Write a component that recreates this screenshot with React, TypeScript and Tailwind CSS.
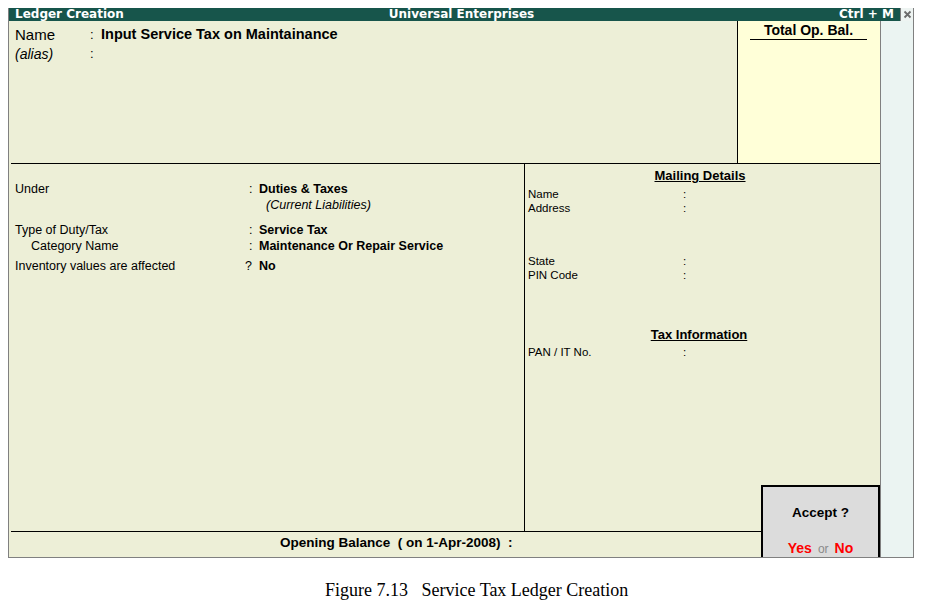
import React from 'react';

const sans = { fontFamily: '"Liberation Sans", Arial, sans-serif' };

function Field({ label, mark = ':', value, indent = false, markClass = '' }: { label: string; mark?: string; value?: React.ReactNode; indent?: boolean; markClass?: string }) {
  return (
    <div className="flex h-[15px] items-center text-[12.5px] leading-none text-black">
      <span className={`w-[234px] shrink-0 ${indent ? 'pl-[16px]' : ''}`}>{label}</span>
      <span className={`w-[10px] shrink-0 ${markClass}`}>{mark}</span>
      <span className="font-bold">{value}</span>
    </div>
  );
}

function MailRow({ label }: { label: string }) {
  return (
    <div className="flex h-[14px] items-center text-[11.5px] leading-none text-black">
      <span className="w-[155px] shrink-0">{label}</span>
      <span>:</span>
    </div>
  );
}

export default function App() {
  return (
    <div className="w-[925px] h-[605px] bg-white relative" style={sans}>
      <div className="pt-[8px] pl-[8px]">
        {/* window frame */}
        <div className="w-[906px] border-x border-b border-[#808080] flex flex-col">
          {/* title bar */}
          <div className="flex h-[13px]">
            <div
              className="flex-1 bg-[#17554b] text-white font-bold text-[12px] leading-[13px] flex items-center px-[6px]"
              style={{ fontFamily: '"DejaVu Sans", Verdana, sans-serif' }}
            >
              <span className="w-[300px]">Ledger Creation</span>
              <span className="flex-1 text-center pl-[14px]">Universal Enterprises</span>
              <span className="w-[300px] text-right">Ctrl + M</span>
            </div>
            <div className="w-[13px] bg-[#eef4f2] border-l border-[#808080] flex items-center justify-center">
              <svg width="9" height="9" viewBox="0 0 9 9">
                <path d="M1.5 1.5 L7.5 7.5 M7.5 1.5 L1.5 7.5" stroke="#6b6b6b" strokeWidth="1.8" />
              </svg>
            </div>
          </div>

          {/* body */}
          <div className="flex h-[536px]">
            <div className="w-[872px] bg-[#edefd7] border-r border-[#808080] relative flex flex-col">
              {/* top section */}
              <div className="flex h-[142px]">
                <div className="flex-1 pl-[6px] pt-[5px]">
                  <div className="flex h-[17px] items-center leading-none">
                    <span className="w-[75px] text-[15px]">Name</span>
                    <span className="w-[11px] text-[13px]">:</span>
                    <span className="text-[14.5px] font-bold">Input Service Tax on Maintainance</span>
                  </div>
                  <div className="flex h-[17px] items-center leading-none mt-[2px]">
                    <span className="w-[75px] text-[14px] italic">(alias)</span>
                    <span className="w-[11px] text-[13px]">:</span>
                  </div>
                </div>
                <div className="w-[143px] bg-[#ffffd8] border-l border-black pt-[2px]">
                  <div className="ml-[12px] w-[117px] border-b border-black text-center text-[14px] font-bold leading-[15px] pb-[1px]">
                    Total Op. Bal.
                  </div>
                </div>
              </div>

              {/* middle section */}
              <div className="pl-[2px]">
                <div className="flex h-[368px] border-t border-black">
                  <div className="w-[514px] border-r border-black pl-[4px] pt-[18px]">
                    <Field label="Under" value="Duties & Taxes" />
                    <div className="h-[15px] flex items-center pl-[251px] text-[12.5px] italic leading-none mt-[1px]">(Current Liabilities)</div>
                    <div className="mt-[10px]">
                      <Field label="Type of Duty/Tax" value="Service Tax" />
                    </div>
                    <div className="mt-[1px]">
                      <Field label="Category Name" indent value="Maintenance Or Repair Service" />
                    </div>
                    <div className="mt-[5px]">
                      <Field label="Inventory values are affected" mark="?" markClass="-ml-[4px] mr-[4px]" value="No" />
                    </div>
                  </div>
                  <div className="flex-1 pl-[3px] pt-[4px]">
                    <div className="text-center text-[13px] font-bold underline leading-[16px] pr-[8px]">Mailing Details</div>
                    <div className="mt-[4px]">
                      <MailRow label="Name" />
                      <MailRow label="Address" />
                    </div>
                    <div className="mt-[39px]">
                      <MailRow label="State" />
                      <MailRow label="PIN Code" />
                    </div>
                    <div className="mt-[44px] text-center text-[13px] font-bold underline leading-[16px] pr-[10px]">Tax Information</div>
                    <div className="mt-[3px]">
                      <MailRow label="PAN / IT No." />
                    </div>
                  </div>
                </div>
              </div>

              {/* bottom row */}
              <div className="pl-[2px]">
                <div className="w-[753px] h-[26px] border-t border-black flex items-center pl-[269px] pb-[4px] text-[13.5px] font-bold leading-none">
                  Opening Balance&nbsp;&nbsp;( on 1-Apr-2008)&nbsp;&nbsp;:
                </div>
              </div>

              {/* accept box */}
              <div className="absolute left-[752px] top-[464px] w-[119px] h-[72px] bg-[#dcdcdc] border-x-2 border-t-2 border-black flex flex-col items-center">
                <div className="mt-[18px] text-[13.5px] font-bold leading-[16px]">Accept ?</div>
                <div className="mt-[19px] flex items-baseline gap-[6px] leading-[16px]">
                  <span className="text-[14px] font-bold text-[#ff0000]">Yes</span>
                  <span className="text-[12px] text-[#8a8a8a]">or</span>
                  <span className="text-[14px] font-bold text-[#ff0000]">No</span>
                </div>
              </div>
            </div>
            <div className="flex-1 bg-[#ebf4f2]" />
          </div>
        </div>

        {/* caption */}
        <div
          className="mt-[22px] pl-[317px] text-[18px] text-black leading-[20px]"
          style={{ fontFamily: '"Liberation Serif", "Times New Roman", serif' }}
        >
          Figure 7.13&nbsp;&nbsp;&nbsp;Service Tax Ledger Creation
        </div>
      </div>
    </div>
  );
}
